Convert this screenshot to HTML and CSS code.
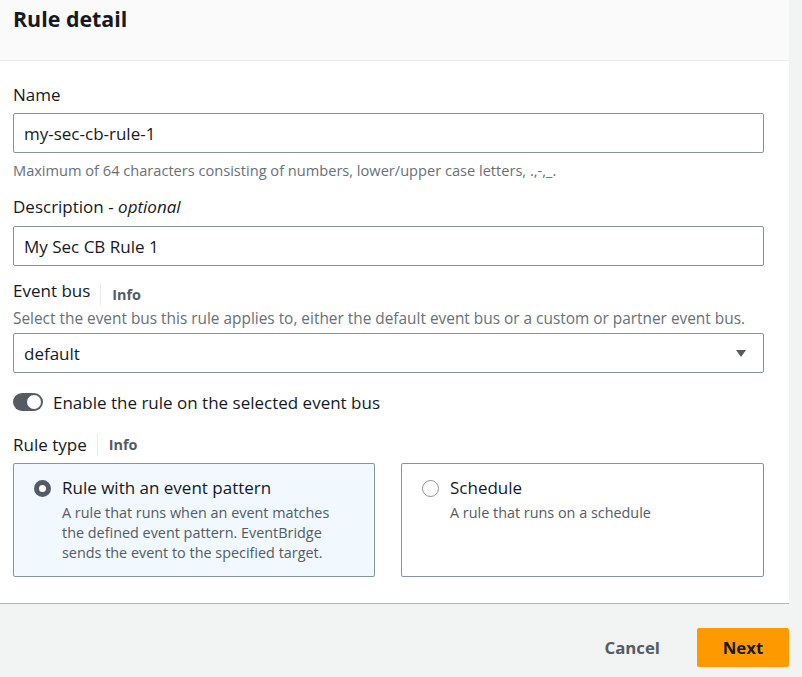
FILE: index.html
```html
<!DOCTYPE html>
<html lang="en">
<head>
<meta charset="utf-8">
<title>Rule detail</title>
<link rel="stylesheet" href="styles.css">
</head>
<body>
<div class="layout">
  <section class="card">
    <header class="card-header">
      <h2 class="card-title">Rule detail</h2>
    </header>
    <div class="card-body">
      <div class="field">
        <label class="label">Name</label>
        <div class="input">my-sec-cb-rule-1</div>
        <div class="hint">Maximum of 64 characters consisting of numbers, lower/upper case letters, .,-,_.</div>
      </div>
      <div class="field">
        <label class="label">Description - <i>optional</i></label>
        <div class="input">My Sec CB Rule 1</div>
      </div>
      <div class="field">
        <div class="label-row"><span class="label">Event bus</span><span class="info">Info</span></div>
        <div class="desc">Select the event bus this rule applies to, either the default event bus or a custom or partner event bus.</div>
        <div class="input select">
          <span>default</span>
          <svg class="caret" width="10" height="7" viewBox="0 0 10 7"><path d="M0 0h10L5 7z" fill="#545b64"/></svg>
        </div>
      </div>
      <div class="toggle-row">
        <span class="toggle"><span class="knob"></span></span>
        <span class="toggle-label">Enable the rule on the selected event bus</span>
      </div>
      <div class="field last">
        <div class="label-row"><span class="label">Rule type</span><span class="info">Info</span></div>
        <div class="tiles">
          <div class="tile selected">
            <span class="radio on"></span>
            <div class="tile-text">
              <div class="tile-title">Rule with an event pattern</div>
              <div class="tile-desc">A rule that runs when an event matches the defined event pattern. EventBridge sends the event to the specified target.</div>
            </div>
          </div>
          <div class="tile">
            <span class="radio"></span>
            <div class="tile-text">
              <div class="tile-title">Schedule</div>
              <div class="tile-desc">A rule that runs on a schedule</div>
            </div>
          </div>
        </div>
      </div>
    </div>
  </section>
  <footer class="actions">
    <button class="btn-link">Cancel</button>
    <button class="btn-primary">Next</button>
  </footer>
</div>
</body>
</html>
```

FILE: styles.css
```css
* { box-sizing: border-box; }
html, body { margin: 0; padding: 0; }
body {
  background: #f2f3f3;
  font-family: "Open Sans", "Noto Sans", sans-serif;
  color: #16191f;
}
.layout { width: 789px; }
.card {
  background: #fff;
  border-bottom: 1px solid #aab7b8;
}
.card-header {
  background: #fafafa;
  border-bottom: 1px solid #eaeded;
  height: 61px;
  padding: 3px 13px 0;
}
.card-title {
  margin: 0;
  font-size: 21.4px;
  font-weight: 700;
  line-height: 32px;
}
.card-body {
  padding: 23px 25px 26px 13px;
}
.field { margin-bottom: 18px; }
.field.last { margin-bottom: 0; }
.label {
  display: block;
  font-size: 17px;
  line-height: 22px;
  margin-bottom: 7px;
}
.label i { font-style: italic; }
.input {
  height: 40px;
  border: 1px solid #879596;
  border-radius: 2px;
  padding: 0 10px;
  display: flex;
  align-items: center;
  font-size: 17px;
}
.hint {
  font-size: 14.6px;
  color: #687078;
  margin-top: 6px;
  line-height: 22px;
  margin-bottom: -3px;
}
.field + .field .label { margin-bottom: 8px; }
.label-row {
  display: flex;
  align-items: center;
  height: 22px;
}
.label-row .label { margin-bottom: 0; display: inline; }
.info {
  font-size: 14.4px;
  font-weight: 700;
  color: #545b64;
  margin-left: 10px;
  padding-left: 11px;
  border-left: 1px solid #eaeded;
  line-height: 22px;
}
.desc {
  font-size: 15.4px;
  color: #687078;
  line-height: 20px;
  margin: 3px 0 4px;
}
.select { justify-content: space-between; padding-right: 17px; }
.caret { display: block; }
.toggle-row {
  display: flex;
  align-items: center;
  height: 22px;
  margin: 18px 0 21px;
}
.toggle {
  width: 30px;
  height: 18px;
  border-radius: 9px;
  background: #545b64;
  position: relative;
  margin-right: 10px;
}
.knob {
  position: absolute;
  right: 2px;
  top: 2px;
  width: 14px;
  height: 14px;
  border-radius: 50%;
  background: #fff;
}
.toggle-label { font-size: 17px; }
.tiles {
  display: grid;
  grid-template-columns: 362px 363px;
  gap: 26px;
  margin-top: 7px;
}
.tile {
  height: 114px;
  border: 1px solid #879596;
  border-radius: 2px;
  padding: 12px 27px 12px 20px;
  display: flex;
  align-items: flex-start;
}
.tile.selected { background: #f1f8fe; }
.radio {
  width: 17px;
  height: 17px;
  border-radius: 50%;
  border: 1.5px solid #879596;
  flex: none;
  margin-top: 3.5px;
  margin-right: 11px;
}
.radio.on { border: 5px solid #545b64; background: #fff; }
.tile-title { font-size: 17px; line-height: 24px; }
.tile-desc {
  font-size: 14.4px;
  color: #545b64;
  line-height: 20px;
  margin-top: 3px;
}
.actions {
  display: flex;
  justify-content: flex-end;
  align-items: center;
  padding-top: 24px;
  gap: 37px;
}
.btn-link {
  background: none;
  border: none;
  font-family: inherit;
  font-size: 16.8px;
  font-weight: 700;
  color: #545b64;
  padding: 0;
}
.btn-primary {
  background: #ff9900;
  border: none;
  border-radius: 2px;
  width: 92px;
  height: 39px;
  font-family: inherit;
  font-size: 16.8px;
  font-weight: 700;
  color: #16191f;
}
```
